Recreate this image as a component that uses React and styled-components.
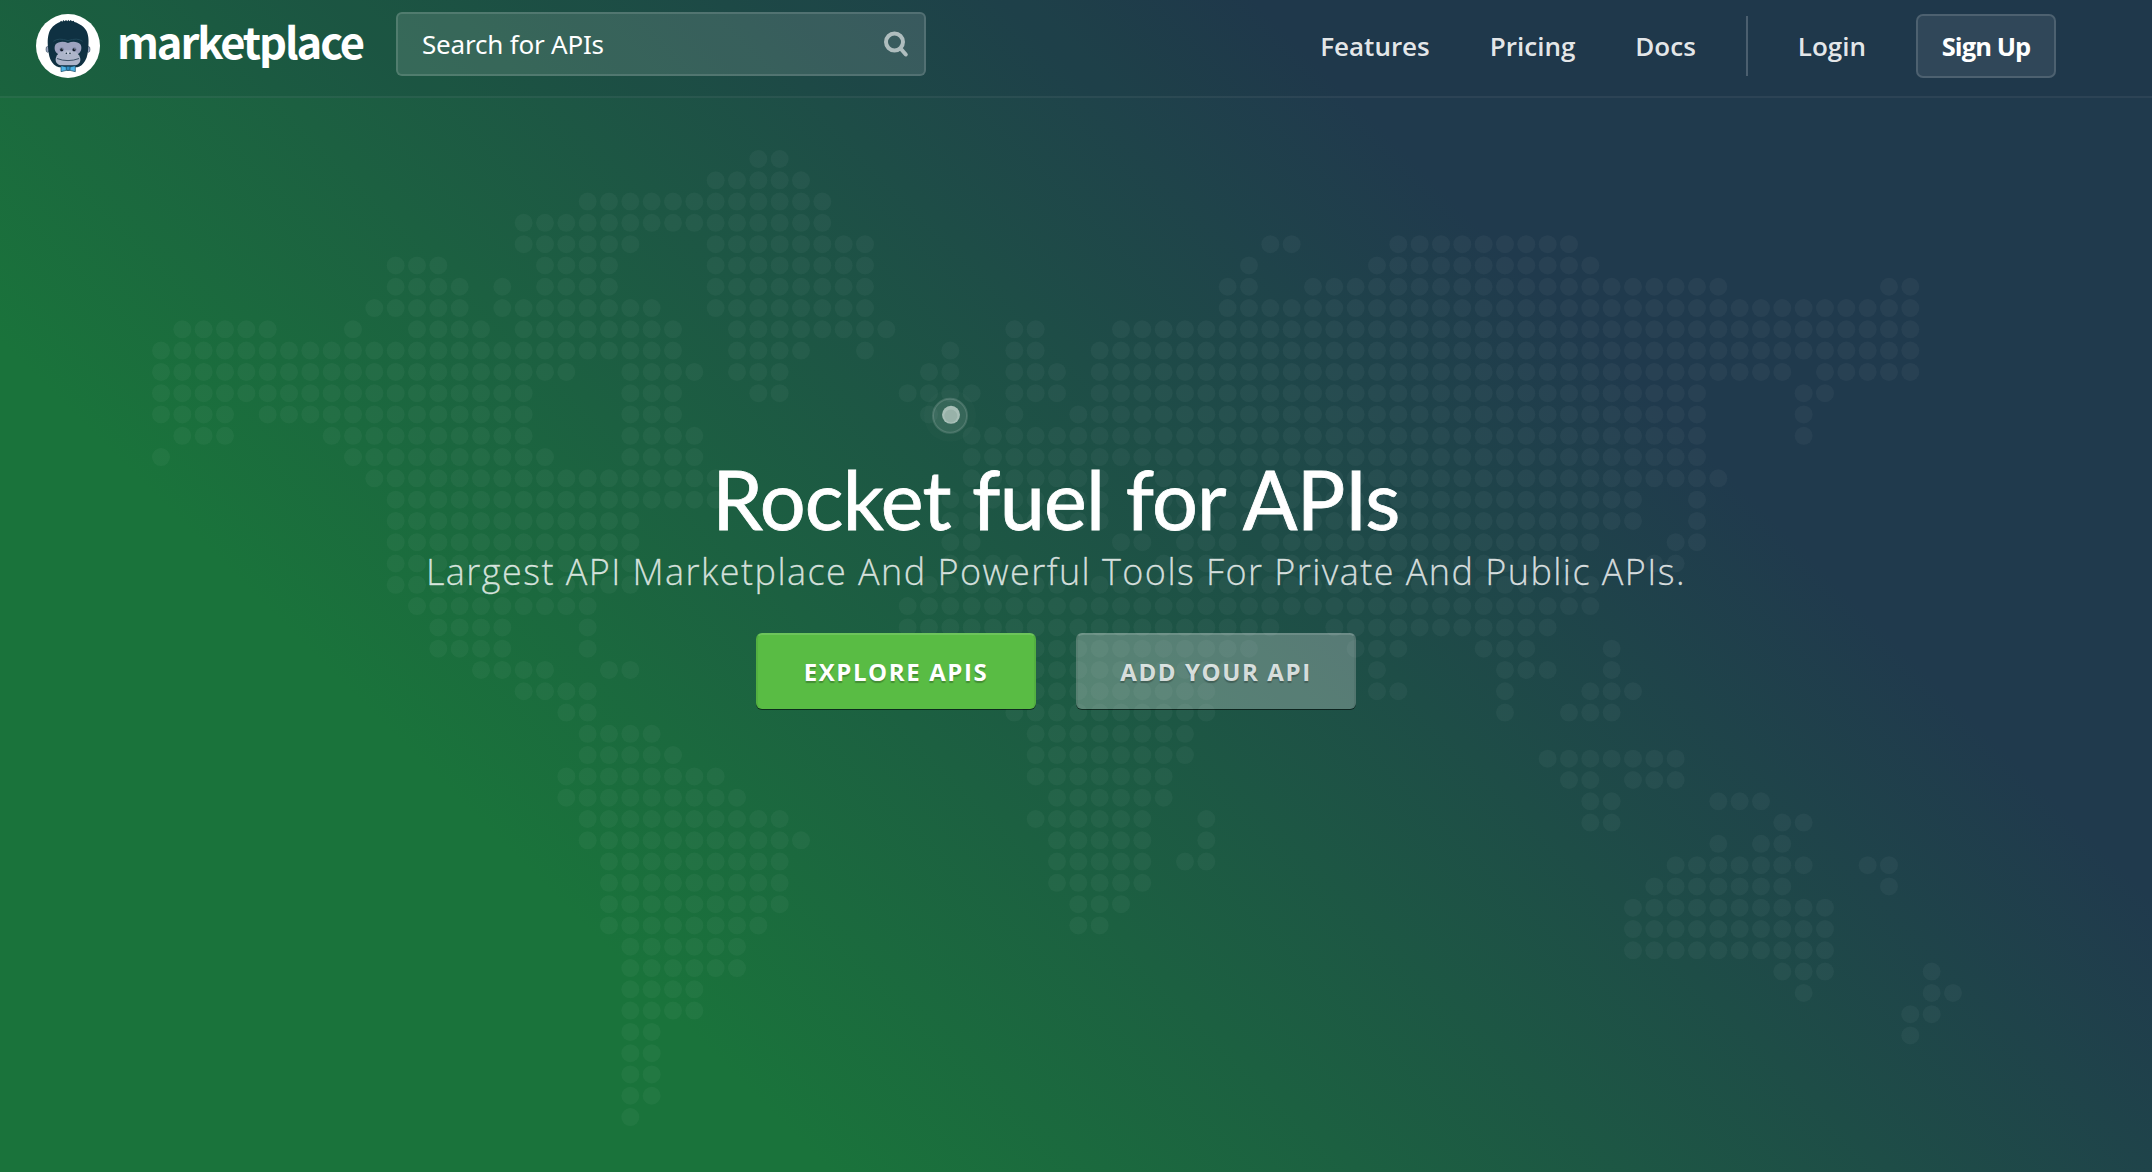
import React from "react";
import styled, { createGlobalStyle } from "styled-components";

const GlobalStyle = createGlobalStyle`
  *, *::before, *::after { box-sizing: border-box; }
  html, body, #root { height: 100%; }
  body {
    margin: 0;
    font-family: "Open Sans", "Noto Sans", sans-serif;
    overflow: hidden;
  }
`;

const Page = styled.div`
  position: relative;
  display: flex;
  flex-direction: column;
  height: 1172px;
  background: linear-gradient(45deg, #1a733b 25%, #203a4d 73%);
  color: #fff;
`;

const Header = styled.header`
  position: relative;
  display: flex;
  align-items: flex-start;
  height: 98px;
  padding: 12px 96px 0 36px;
  background: rgba(24, 50, 62, 0.12);
  border-bottom: 2px solid rgba(255, 255, 255, 0.06);
`;

const Brand = styled.a`
  display: flex;
  align-items: center;
  width: 360px;
  height: 64px;
  margin-top: 2px;
  gap: 17px;
`;

const BrandName = styled.span`
  font: 700 43.5px/60px "Noto Sans CJK SC", "Noto Sans", sans-serif;
  letter-spacing: -2.1px;
  margin-top: -10px;
`;

const SearchBox = styled.label`
  display: flex;
  align-items: center;
  justify-content: space-between;
  width: 530px;
  height: 64px;
  padding: 0 15px 0 24px;
  border: 2px solid rgba(255, 255, 255, 0.13);
  border-radius: 6px;
  background: rgba(255, 255, 255, 0.12);
`;

const SearchText = styled.span`
  font: 400 26px/36px "Noto Sans", sans-serif;
  letter-spacing: -0.2px;
`;

const Nav = styled.nav`
  display: flex;
  align-items: center;
  height: 64px;
  margin: 2px 0 0 auto;
`;

const NavLink = styled.a`
  font: 600 26px/36px "Open Sans", sans-serif;
  color: rgba(255, 255, 255, 0.9);
  margin-right: ${(p) => p.$gap}px;
`;

const Divider = styled.span`
  width: 2px;
  height: 60px;
  margin-right: 50px;
  background: rgba(255, 255, 255, 0.2);
`;

const SignUp = styled.button`
  width: 140px;
  height: 64px;
  padding: 0;
  border: 2px solid rgba(255, 255, 255, 0.14);
  border-radius: 7px;
  background: rgba(255, 255, 255, 0.08);
  color: #fff;
  font: 700 25.5px/36px "Open Sans", sans-serif;
  letter-spacing: -0.9px;
`;

const MapLayer = styled.svg`
  position: absolute;
  inset: 0;
  width: 2152px;
  height: 1172px;
`;

const Hero = styled.main`
  position: relative;
  display: flex;
  flex-direction: column;
  align-items: center;
  padding: 351px 40px 0 0;
`;

const Title = styled.h1`
  margin: 0;
  font: 400 81px/100px Lato, sans-serif;
  -webkit-text-stroke: 0.8px #fff;
  letter-spacing: -0.8px;
  word-spacing: 1.5px;
  white-space: nowrap;
`;

const Subtitle = styled.p`
  margin: 0;
  font: 300 36px/46px "Open Sans", sans-serif;
  letter-spacing: 1.44px;
  -webkit-text-stroke: 0.3px rgba(255, 255, 255, 0.6);
  color: rgba(255, 255, 255, 0.8);
  white-space: nowrap;
`;

const Actions = styled.div`
  display: flex;
  gap: 40px;
  margin-top: 38px;
`;

const ActionButton = styled.button`
  width: 280px;
  height: 76px;
  padding: 0;
  border: 2px solid rgba(0, 0, 0, 0.06);
  border-top-color: rgba(255, 255, 255, 0.12);
  border-bottom-width: 0;
  border-radius: 6px;
  background: ${(p) => (p.$primary ? "#59bc44" : "rgba(255, 255, 255, 0.26)")};
  background-clip: border-box;
  box-shadow: 0 1px 0 rgba(0, 0, 0, 0.55);
  color: ${(p) => (p.$primary ? "#fff" : "rgba(255, 255, 255, 0.8)")};
  text-shadow: 0 2px 1px rgba(0, 0, 0, 0.25);
  font: 700 24px/32px "Open Sans", sans-serif;
  letter-spacing: 1.6px;
`;

/* Inclusive column runs of land dots, one string per map row. */
const NORTH = [
  "28-29", "26-30", "20-31", "17-31",
  "17-22 26-33 52-53 58-66",
  "11-13 18-21 26-33 51 57-67",
  "11-14 16 18-21 26-33 50-51 54-73 81-82",
  "10-14 16-23 26-33 50-82",
  "1-5 9 12-15 17-24 27-34 40-41 45-82",
  "0-24 27-30 33 37 40-41 44-82",
  "0-19 22-25 27-29 36-37 40-42 44-76 78-82",
  "0-17 22-24 28-29 35-38 40-42 44-72 77-78",
  "0-3 5-17 22-24 36 40 43-72 77",
  "1-3 8-17 22-25 38-72 77",
  "0 9-18 22-25 38-72",
  "10-26 38-44 47-73",
  "11-26 37-44 47-69 72",
  "11-22 37-38 40-44 47-69 72",
  "11-22 37-38 45-46 48-50 52-67 71-72",
  "11-22 37-40 47-66 70-71",
  "11-22 36-42 44-64 66-67",
  "12-20 35-67",
  "13-16 20 35-52 55-65",
  "13-16 20 38-51 56-58 62-64 68",
  "15-18 21-22 38-50 57 63-65 68",
  "17-20 39-49 57-58 63 67-69",
  "19-20 40-49 63 66-68",
  "20-23 41-48", "20-24 41-48", "19-26 41-47", "19-27 42-47",
  "20-29 41-46 49", "20-30 42-46 49", "21-29 42-46 48-49", "21-29 42-46",
  "21-29 43-45", "21-28 43-44", "22-27", "22-27", "22-25", "22-25",
  "22-23", "22-23", "22-23", "22-23", "22",
];

const OCEANIA = [
  "65-71", "66-67 69-71", "67-68 73-75", "67-68 76-77", "73 75-76",
  "71-77 80-81", "70-76 81", "69-78", "69-78", "69-78", "76-78 83",
  "77 83-84", "82-83", "82",
];

function dots(rows, top) {
  return rows.flatMap((row, r) =>
    row.split(" ").flatMap((run) => {
      const [a, b = a] = run.split("-").map(Number);
      return Array.from({ length: b - a + 1 }, (_, i) => (
        <circle key={`${r}-${a + i}`} cx={161 + (a + i) * 21.333} cy={top + r * 21.29} r="9" />
      ));
    })
  );
}

function WorldMap() {
  return (
    <MapLayer viewBox="0 0 2152 1172" aria-hidden="true">
      <g fill="#fff" fillOpacity="0.04">
        {dots(NORTH, 159)}
        {dots(OCEANIA, 758.7)}
      </g>
      <circle cx="950" cy="415.8" r="26" fill="#fff" fillOpacity="0.015" />
      <circle cx="950" cy="415.8" r="17" fill="#fff" fillOpacity="0.1" stroke="#fff" strokeOpacity="0.14" strokeWidth="2" />
      <circle cx="951" cy="414.8" r="9" fill="#a8bfb7" />
      <circle cx="950.8" cy="416" r="6.5" fill="#98b2a9" />
    </MapLayer>
  );
}

function GorillaLogo() {
  return (
    <svg width="64" height="64" viewBox="0 0 192 192">
      <circle cx="96" cy="96" r="96" fill="#fff" />
      <ellipse cx="35" cy="106" rx="5" ry="9" fill="#9aa3bd" stroke="#0f3142" strokeWidth="1.5" />
      <ellipse cx="157" cy="106" rx="5" ry="9" fill="#9aa3bd" stroke="#0f3142" strokeWidth="1.5" />
      <path
        fill="#0f3142"
        d="M36 98C34 82 35 60 44 46C52 33 64 27 72 24L75 20L79 23L82 18L86 22L90 18L94 22L97 17L100 22L104 18L108 22L113 20L115 24C130 28 146 39 152 52C159 67 158 86 157 99C156 113 155 128 147 141C141 151 133 158 124 160H69C58 157 48 148 43 136C38 123 37 110 36 98Z"
      />
      <path d="M52 82Q68 70 96 80Q124 70 140 82" fill="none" stroke="#1f4759" strokeWidth="3" />
      <path
        fill="#9da2bf"
        d="M96 87C82 80 66 83 59 91C54 98 55 111 62 117L67 121H125L130 117C137 111 138 98 133 91C126 83 110 80 96 87Z"
      />
      <path fill="#adb5ca" d="M96 108C79 108 70 114 63 124C55 137 59 151 73 154H119C133 151 137 137 129 124C122 114 113 108 96 108Z" />
      <circle cx="77" cy="106" r="6.5" fill="#7d86a6" />
      <circle cx="115" cy="106" r="6.5" fill="#7d86a6" />
      <circle cx="77" cy="107" r="4.5" fill="#101a27" />
      <circle cx="114" cy="107" r="4.5" fill="#101a27" />
      <circle cx="78.5" cy="105" r="1.3" fill="#fff" />
      <circle cx="115.5" cy="105" r="1.3" fill="#fff" />
      <path d="M84 116Q96 109 108 116Q104 123 96 121Q88 123 84 116Z" fill="#c5cbdc" />
      <circle cx="91" cy="118" r="2.5" fill="#17303f" />
      <circle cx="102" cy="118" r="2.5" fill="#17303f" />
      <path d="M64 134Q96 146 128 134" fill="none" stroke="#223c50" strokeWidth="2.5" strokeLinecap="round" />
      <path d="M75 155L92 159H101L118 155V173L101 169H92L75 173Z" fill="#4fb4e6" stroke="#15415a" strokeWidth="2" />
      <rect x="91" y="157" width="11" height="12" rx="2" fill="#348fc4" stroke="#15415a" strokeWidth="2" />
    </svg>
  );
}

function SearchIcon() {
  return (
    <svg width="26" height="28" viewBox="0 0 26 28" fill="none" stroke="#fff" strokeOpacity="0.6">
      <path
        d="M18 19L22.8 24.5M20 12A8.5 8.5 0 1 1 3 12A8.5 8.5 0 1 1 20 12"
        strokeWidth="4"
        strokeLinecap="round"
      />
    </svg>
  );
}

export default function App() {
  return (
    <Page>
      <GlobalStyle />
      <WorldMap />
      <Header>
        <Brand>
          <GorillaLogo />
          <BrandName>marketplace</BrandName>
        </Brand>
        <SearchBox>
          <SearchText>Search for APIs</SearchText>
          <SearchIcon />
        </SearchBox>
        <Nav>
          <NavLink $gap={60}>Features</NavLink>
          <NavLink $gap={60}>Pricing</NavLink>
          <NavLink $gap={50}>Docs</NavLink>
          <Divider />
          <NavLink $gap={50}>Login</NavLink>
          <SignUp>Sign Up</SignUp>
        </Nav>
      </Header>
      <Hero>
        <Title>Rocket fuel for APIs</Title>
        <Subtitle>Largest API Marketplace And Powerful Tools For Private And Public APIs.</Subtitle>
        <Actions>
          <ActionButton $primary>EXPLORE APIS</ActionButton>
          <ActionButton>ADD YOUR API</ActionButton>
        </Actions>
      </Hero>
    </Page>
  );
}
